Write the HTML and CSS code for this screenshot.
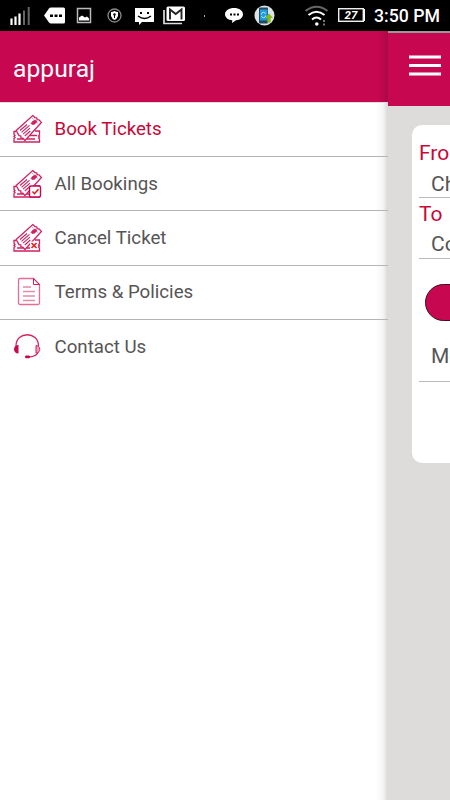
FILE: index.html
```html
<!DOCTYPE html>
<html lang="en">
<head>
<meta charset="utf-8">
<title>Book Tickets</title>
<link rel="stylesheet" href="styles.css">
</head>
<body>
<svg class="defs" width="0" height="0">
  <defs>
    <g id="ticket" fill="none" stroke="#d02060" stroke-width="1.300">
      <path d="M3.200 16.500 19.800 1.600l2.200 2 1.700 .2 .5 1.800 1.800.2 2.400 2.600L12 26.500 9.800 24.200l-1.800-.3-.2-2-1.800-.3z" fill="#fff"/>
      <path d="M7 16.500l7-6M8.500 18.300l8-7M10 20.200l7-6M11.800 22l5.500-5" stroke-width="1.100"/>
      <path d="M18 9.500l2-2.500 3-.8 .8 1.800-2.300 2.200-2.500.3z" fill="#d02060" stroke-width=".7"/>
      <path d="M19.500 4.500l5.500 5" stroke-width=".8" stroke-dasharray="1.200 1"/>
    </g>
    <path id="back-ticket" d="M3 17.500H1v3l1 1-1 1 1 1-1 1v3.500h25.500v-3l-1-1 1-1-1-1 1-1v-4H22M4 25h6M14 25h8M17 21.500h7" fill="none" stroke="#d02060" stroke-width="1.300"/>
  </defs>
</svg>
<header class="status">
  <svg class="signal" viewBox="10 0 21 31"><path d="M11.500 18.500V25M15.500 16.500V25M19.500 13.500V25" stroke="#fff" stroke-width="2.200"/><path d="M24 10.500V25M28.700 7V25" stroke="#666" stroke-width="2"/></svg>
  <svg class="tag" viewBox="44 0 22 31"><path d="M44 15.500l5-7q.8-1 2-1h12.500q1.500 0 1.500 1.500v13q0 1.500-1.500 1.500H51q-1.200 0-2-1z" fill="#fff"/><path d="M50 14.500h3v2.500h-3zM54.500 14.500h3v2.500h-3zM59 14.500h3v2.500h-3z"/></svg>
  <svg class="photo" viewBox="76 0 16 31"><path d="M77.500 8.500h13v14h-13z" fill="none" stroke="#bbb" stroke-width="1.500"/><path d="M79 20.500v-3l3-2 3 2 2-1 2 2v2z" fill="#fff"/></svg>
  <svg class="shield" viewBox="107 0 15 31"><circle cx="114.500" cy="15.500" r="6.500" fill="none" stroke="#888" stroke-width="1.300"/><path d="M111 12q2 0 3.500-1 1.500 1 3.500 1v4q-1 3-3.500 4-2.500-1-3.500-4z" fill="#fff"/><circle cx="114.500" cy="14.500" r="1.200"/><path d="M114.500 15v3" stroke="#000"/></svg>
  <svg class="smile" viewBox="135 0 19 31"><path d="M135 8h19v14h-12l-3 3v-3h-4z" fill="#fff"/><path d="M140 12h2v2h-2zM147 12h2v2h-2z"/><path d="M138 16q6.500 5 13 0" fill="none" stroke="#000" stroke-width="1.300"/></svg>
  <svg class="mail" viewBox="163 0 22 31"><path d="M164 10v13.500h18" fill="none" stroke="#ddd" stroke-width="1.700"/><rect x="166.500" y="6.500" width="18.500" height="14.500" rx="1.500" fill="#fff"/><path d="M170 19.500V9.500l5.700 4.500 5.800-4.500v10" fill="none" stroke="#222" stroke-width="1.900"/></svg>
  <svg class="dot" viewBox="204 0 1 31"><path d="M204 15h1v2h-1z" fill="#aaa"/></svg>
  <svg class="chat" viewBox="225 0 18 31"><path d="M234 8c5 0 9 2.500 9 6.300 0 3.500-3 5.700-7 6l-4 2.700.3-2.700c-4-.3-7.300-2.500-7.300-6C225 10.500 229 8 234 8z" fill="#fff"/><path d="M230 13.500h2v2h-2zM233.500 13.500h2v2h-2zM237 13.500h2v2h-2z"/></svg>
  <svg class="sync" viewBox="254 0 21 31"><circle cx="264.500" cy="15.500" r="10" fill="#dce3e5"/><rect x="259" y="7.500" width="9" height="16" rx="1" fill="#23495f"/><path d="M260 9.500h7.500v11H260z" fill="#209bdc"/><path d="M261.500 14.500a2 2 0 0 1 4-.5M265.500 15.500a2 2 0 0 1-4 .5" fill="none" stroke="#a8e4ff"/><path d="M269 13.500l4 4.500h-2.300v4.500h-3.400V18H265z" fill="#88b814"/></svg>
  <svg class="wifi" viewBox="305 0 23 31"><g fill="none" stroke-width="2"><path d="M305.500 11q11-8.500 22 0" stroke="#666"/><path d="M308.500 15q8-6.500 16 0M312 19.500q4.500-4 9 0" stroke="#fff"/></g><circle cx="316.800" cy="24" r="1.800" fill="#fff"/><path d="M323 20h2v2h-2zM323 23.500h2v2h-2z" fill="#777"/></svg>
  <span class="battery">27</span>
  <span class="clock">3:50 PM</span>
</header>
<div class="screen">
  <aside class="drawer">
    <h1 class="user">appuraj</h1>
    <nav class="menu">
      <a class="item active"><svg viewBox="0 0 30 30"><use href="#back-ticket"/><use href="#ticket"/></svg>Book Tickets</a>
      <a class="item"><svg viewBox="0 0 30 30"><use href="#back-ticket"/><use href="#ticket"/><rect x="16.500" y="17" width="11" height="11" rx="1.500" fill="#fff" stroke="#c70850" stroke-width="1.400"/><path d="M19.500 22.500l2 2.200 4-4.500" fill="none" stroke="#e01515" stroke-width="1.500"/></svg>All Bookings</a>
      <a class="item"><svg viewBox="0 0 30 30"><use href="#back-ticket"/><use href="#ticket"/><path d="M17 18.500h8v8h-8z" fill="#fff"/><path d="M18.500 20l5 5m0-5l-5 5" fill="none" stroke="#f02020" stroke-width="1.700"/></svg>Cancel Ticket</a>
      <a class="item"><svg viewBox="0 0 30 30"><path d="M7 1.500h13.500l6 6V26q0 1.500-1.500 1.500H7q-1.500 0-1.500-1.500V3Q5.500 1.500 7 1.500z" fill="none" stroke="#e36b96" stroke-width="1.300"/><path d="M20.500 1.500v6h6z" fill="none" stroke="#d02060"/><path d="M10 10h8M10 14.500h12M10 19h12M10 23.500h12" stroke="#e58aa9" stroke-width="1.300"/></svg>Terms &amp; Policies</a>
      <a class="item"><svg viewBox="0 0 30 30"><path d="M3 14C3-1 25.500-1 25.500 14M25.500 19q-1 5.500-10 6" fill="none" stroke="#d3245f" stroke-width="1.300"/><path d="M5.500 13v8.500c-6 0-6-8.500 0-8.500z" fill="#c70850"/><path d="M23 13.500v7.500c5 0 5-7.500 0-7.500z" fill="#eda0b9" stroke="#d3245f"/><rect x="12" y="23.500" width="5" height="2.800" rx="1.400" fill="#c70850"/></svg>Contact Us</a>
    </nav>
  </aside>
  <main class="page">
    <div class="bar"><svg viewBox="0 0 32 22"><path d="M0 2h32M0 10.500h32M0 19h32" stroke="#fff" stroke-width="3.200"/></svg></div>
    <section class="card">
      <label class="label">From</label>
      <div class="field">Chennai</div>
      <label class="label to">To</label>
      <div class="field second">Coimbatore</div>
      <div class="pill"></div>
      <div class="field day">Monday</div>
    </section>
  </main>
</div>
</body>
</html>
```
FILE: styles.css
```css
* { box-sizing: border-box; }
body {
  margin: 0;
  width: 450px;
  height: 800px;
  overflow: hidden;
  background: #fff;
  font-family: Roboto, "Liberation Sans", sans-serif;
  color: #555;
}
.defs { display: block; }
.status {
  display: flex;
  height: 31px;
  padding-left: 10px;
  background: #000;
  color: #fff;
}
.status svg { flex: none; height: 31px; }
.signal { width: 21px; }
.tag { width: 22px; margin-left: 13px; }
.photo { width: 16px; margin-left: 10px; }
.shield { width: 15px; margin-left: 15px; }
.smile { width: 19px; margin-left: 13px; }
.mail { width: 22px; margin-left: 9px; }
.dot { width: 1px; margin-left: 19px; }
.chat { width: 18px; margin-left: 20px; }
.sync { width: 21px; margin-left: 11px; }
.wifi { width: 23px; margin-left: 30px; }
.battery {
  flex: none;
  width: 26px;
  height: 14px;
  margin: 8px 0 0 10px;
  border: 1px solid #eee;
  box-shadow: 2px 0 0 -1px #fff, inset 0 0 0 .5px #ccc;
  font-size: 11.500px;
  font-style: italic;
  font-weight: 700;
  line-height: 13px;
  text-align: center;
}
.clock {
  flex: none;
  margin-left: 10px;
  font-size: 17.700px;
  font-weight: 500;
  line-height: 33px;
  white-space: nowrap;
}
.screen { display: flex; height: 769px; }
.drawer {
  flex: none;
  width: 388px;
  background: linear-gradient(to right, #fff 376px, #f5f5f5 383px, #d8d8d8 388px);
}
.user {
  height: 71px;
  margin: 0;
  padding-left: 13px;
  background: linear-gradient(to right, #c70850 378px, #ad0747 388px);
  color: #fff;
  font-size: 24.700px;
  font-weight: 400;
  line-height: 75px;
  box-shadow: 0 1px 0 #ddd;
}
.item {
  display: flex;
  align-items: center;
  height: 54.400px;
  padding-left: 13px;
  border-bottom: 1px solid #b5b5b5;
  font-size: 18.700px;
}
.item:first-child { height: 55px; padding-bottom: 1px; }
.item:last-child { border-bottom: 0; padding-bottom: 1px; }
.item svg { width: 30px; height: 30px; margin-right: 11.500px; }
.active { color: #c70838; }
.page {
  flex: none;
  width: 62px;
  overflow: hidden;
  background: #dddcda;
}
.bar {
  height: 75px;
  padding: 22px 0 0 21px;
  border-top: 2px solid #999;
  background: #c70850;
}
.bar svg { display: block; width: 32px; height: 22px; }
.card {
  width: 400px;
  height: 338px;
  margin: 19px 0 0 24px;
  padding: 16px 7px 0;
  border-radius: 10px;
  background: #fff;
}
.label {
  display: block;
  height: 24px;
  color: #c70838;
  font-size: 21px;
  line-height: 24px;
}
.field {
  height: 33px;
  padding-left: 12px;
  border-bottom: 1px solid #bbb;
  font-size: 21px;
  line-height: 38px;
}
.to { height: 26px; line-height: 32px; }
.second { height: 35px; line-height: 41px; }
.pill {
  width: 150px;
  height: 37px;
  margin: 25px 0 0 6px;
  border: 1px solid #40101f;
  border-radius: 19px;
  background: #c70850;
}
.day { height: 61px; line-height: 70px; }
```
